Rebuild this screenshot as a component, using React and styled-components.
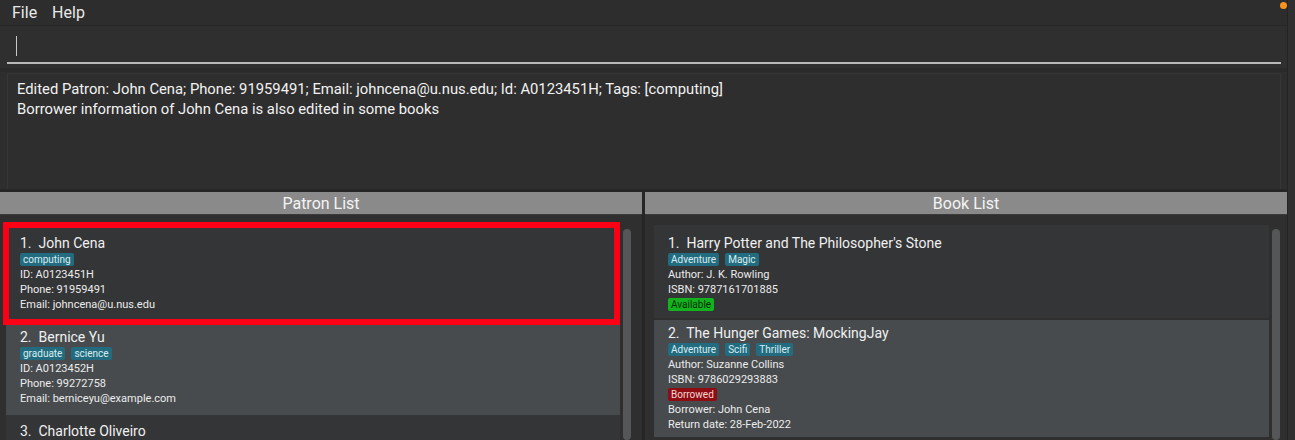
import React from "react";
import styled, { createGlobalStyle } from "styled-components";

const Global = createGlobalStyle`
  html, body { margin: 0; padding: 0; background: #2e2e2e; }
  body { font-family: Roboto, "Liberation Sans", sans-serif; }
`;

const Frame = styled.div`
  width: 1295px;
  height: 440px;
  overflow: hidden;
  display: flex;
  background: #2e2e2e;
  position: relative;
`;

const Main = styled.div`
  width: 1288px;
  display: flex;
  flex-direction: column;
`;

const EdgeStrip = styled.div`
  width: 7px;
  background: #303030;
  border-left: 1px solid #242424;
`;

const Dot = styled.div`
  position: absolute;
  top: 2px;
  right: 8px;
  width: 7px;
  height: 7px;
  border-radius: 50%;
  background: #f7931e;
`;

const MenuBar = styled.div`
  height: 25px;
  display: flex;
  align-items: center;
  gap: 15px;
  padding-left: 12px;
  border-bottom: 1px solid #272727;
  background: #2d2d2d;
`;

const MenuItem = styled.span`
  color: #e8e8e8;
  font-size: 16px;
`;

const CommandArea = styled.div`
  height: 42px;
  padding: 0 6px 0 7px;
  display: flex;
  background: #2f2f2f;
  border-bottom: 4px solid #2a2a2a;
`;

const CommandInput = styled.div`
  flex: 1;
  border-bottom: 2px solid #b8b8b8;
  margin-bottom: 4px;
  display: flex;
  align-items: center;
  padding-left: 9px;
`;

const Caret = styled.div`
  width: 1px;
  height: 20px;
  background: #c8c8c8;
  margin-top: 3px;
`;

const ResultBox = styled.div`
  height: 105px;
  margin: 1px 6px 0 7px;
  border: 1px solid #363636;
  border-bottom: none;
  background: #2e2e2e;
  padding: 5px 9px;
  color: #f2f2f2;
  font-size: 14.8px;
  line-height: 20px;
`;

const Panels = styled.div`
  flex: 1;
  display: grid;
  grid-template-columns: 642px 642px;
  column-gap: 3px;
  border-top: 3px solid #262626;
  background: #262626;
  min-height: 0;
`;

const Panel = styled.div`
  display: flex;
  flex-direction: column;
  background: #2f2f2f;
  min-height: 0;
`;

const PanelHeader = styled.div`
  height: 22px;
  background: #8a8a8a;
  color: #f4f4f4;
  font-size: 16px;
  display: flex;
  align-items: center;
  justify-content: center;
  border-bottom: 1px solid #3a3a3a;
`;

const ListArea = styled.div`
  flex: 1;
  display: flex;
  padding: ${(p) => p.$pad};
  gap: 3px;
  min-height: 0;
`;

const Cards = styled.div`
  flex: 1;
  display: flex;
  flex-direction: column;
  gap: ${(p) => p.$gap}px;
`;

const Card = styled.div`
  flex-shrink: 0;
  background: ${(p) => (p.$alt ? "#474b4e" : "#343537")};
  border: ${(p) => (p.$selected ? "6px solid #fe0016" : "none")};
  padding: ${(p) => (p.$selected ? "6px 8px 7px 11px" : p.$pad)};
  margin: ${(p) => (p.$selected ? "0 0 0 -3px" : "0")};
  height: ${(p) => p.$h}px;
  box-sizing: border-box;
  display: flex;
  flex-direction: column;
`;

const Title = styled.div`
  color: #f0f0f0;
  font-size: 14px;
  line-height: 18px;
  height: 18px;
  white-space: pre;
`;

const TagRow = styled.div`
  display: flex;
  gap: 6px;
  height: 15px;
  align-items: center;
`;

const Tag = styled.span`
  background: ${(p) => p.$bg || "#236c80"};
  color: ${(p) => p.$fg || "#d8ecf0"};
  font-size: 10px;
  line-height: 13px;
  padding: 0 3px;
  border-radius: 2px;
`;

const Detail = styled.div`
  color: #ececec;
  font-size: 11px;
  line-height: 15px;
  height: 15px;
  white-space: nowrap;
`;

const ScrollTrack = styled.div`
  width: 8px;
  margin-top: ${(p) => p.$top}px;
  background: #555657;
  border-radius: 4px;
  flex-shrink: 0;
`;

const patrons = [
  {
    name: "John Cena",
    tags: ["computing"],
    id: "A0123451H",
    phone: "91959491",
    email: "johncena@u.nus.edu",
  },
  {
    name: "Bernice Yu",
    tags: ["graduate", "science"],
    id: "A0123452H",
    phone: "99272758",
    email: "berniceyu@example.com",
  },
  {
    name: "Charlotte Oliveiro",
    tags: ["student"],
    id: "A0123453H",
    phone: "93210283",
    email: "charlotte@example.com",
  },
];

const books = [
  {
    title: "Harry Potter and The Philosopher's Stone",
    tags: ["Adventure", "Magic"],
    author: "J. K. Rowling",
    isbn: "9787161701885",
    available: true,
  },
  {
    title: "The Hunger Games: MockingJay",
    tags: ["Adventure", "Scifi", "Thriller"],
    author: "Suzanne Collins",
    isbn: "9786029293883",
    available: false,
    borrower: "John Cena",
    returnDate: "28-Feb-2022",
  },
];

export default function App() {
  return (
    <>
      <Global />
      <Frame>
        <Main>
          <MenuBar>
            <MenuItem>File</MenuItem>
            <MenuItem>Help</MenuItem>
          </MenuBar>
          <CommandArea>
            <CommandInput>
              <Caret />
            </CommandInput>
          </CommandArea>
          <ResultBox>
            Edited Patron: John Cena; Phone: 91959491; Email: johncena@u.nus.edu; Id: A0123451H; Tags: [computing]
            <br />
            Borrower information of John Cena is also edited in some books
          </ResultBox>
          <Panels>
            <Panel>
              <PanelHeader>Patron List</PanelHeader>
              <ListArea $pad="7px 11px 0 6px">
                <Cards $gap={0}>
                  {patrons.map((p, i) => (
                    <Card
                      key={p.name}
                      $selected={i === 0}
                      $alt={i % 2 === 1}
                      $h={i === 0 ? 103 : 90}
                      $pad={i === 2 ? "7px 8px 0 14px" : "3px 8px 0 14px"}
                    >
                      <Title>{`${i + 1}.  ${p.name}`}</Title>
                      <TagRow>
                        {p.tags.map((t) => (
                          <Tag key={t}>{t}</Tag>
                        ))}
                      </TagRow>
                      <Detail>ID: {p.id}</Detail>
                      <Detail>Phone: {p.phone}</Detail>
                      <Detail>Email: {p.email}</Detail>
                    </Card>
                  ))}
                </Cards>
                <ScrollTrack $top={7} />
              </ListArea>
            </Panel>
            <Panel>
              <PanelHeader>Book List</PanelHeader>
              <ListArea $pad="10px 7px 0 9px">
                <Cards $gap={2}>
                  {books.map((b, i) => (
                    <Card
                      key={b.title}
                      $alt={i % 2 === 1}
                      $h={i === 0 ? 93 : 117}
                      $pad={i === 0 ? "9px 8px 0 14px" : "4px 8px 0 14px"}
                    >
                      <Title>{`${i + 1}.  ${b.title}`}</Title>
                      <TagRow>
                        {b.tags.map((t) => (
                          <Tag key={t}>{t}</Tag>
                        ))}
                      </TagRow>
                      <Detail>Author: {b.author}</Detail>
                      <Detail>ISBN: {b.isbn}</Detail>
                      <TagRow>
                        {b.available ? (
                          <Tag $bg="#12b31c" $fg="#08300a">Available</Tag>
                        ) : (
                          <Tag $bg="#8e0c12" $fg="#f4d6d6">Borrowed</Tag>
                        )}
                      </TagRow>
                      {b.borrower && <Detail>Borrower: {b.borrower}</Detail>}
                      {b.returnDate && <Detail>Return date: {b.returnDate}</Detail>}
                    </Card>
                  ))}
                </Cards>
                <ScrollTrack $top={4} />
              </ListArea>
            </Panel>
          </Panels>
        </Main>
        <EdgeStrip />
        <Dot />
      </Frame>
    </>
  );
}
